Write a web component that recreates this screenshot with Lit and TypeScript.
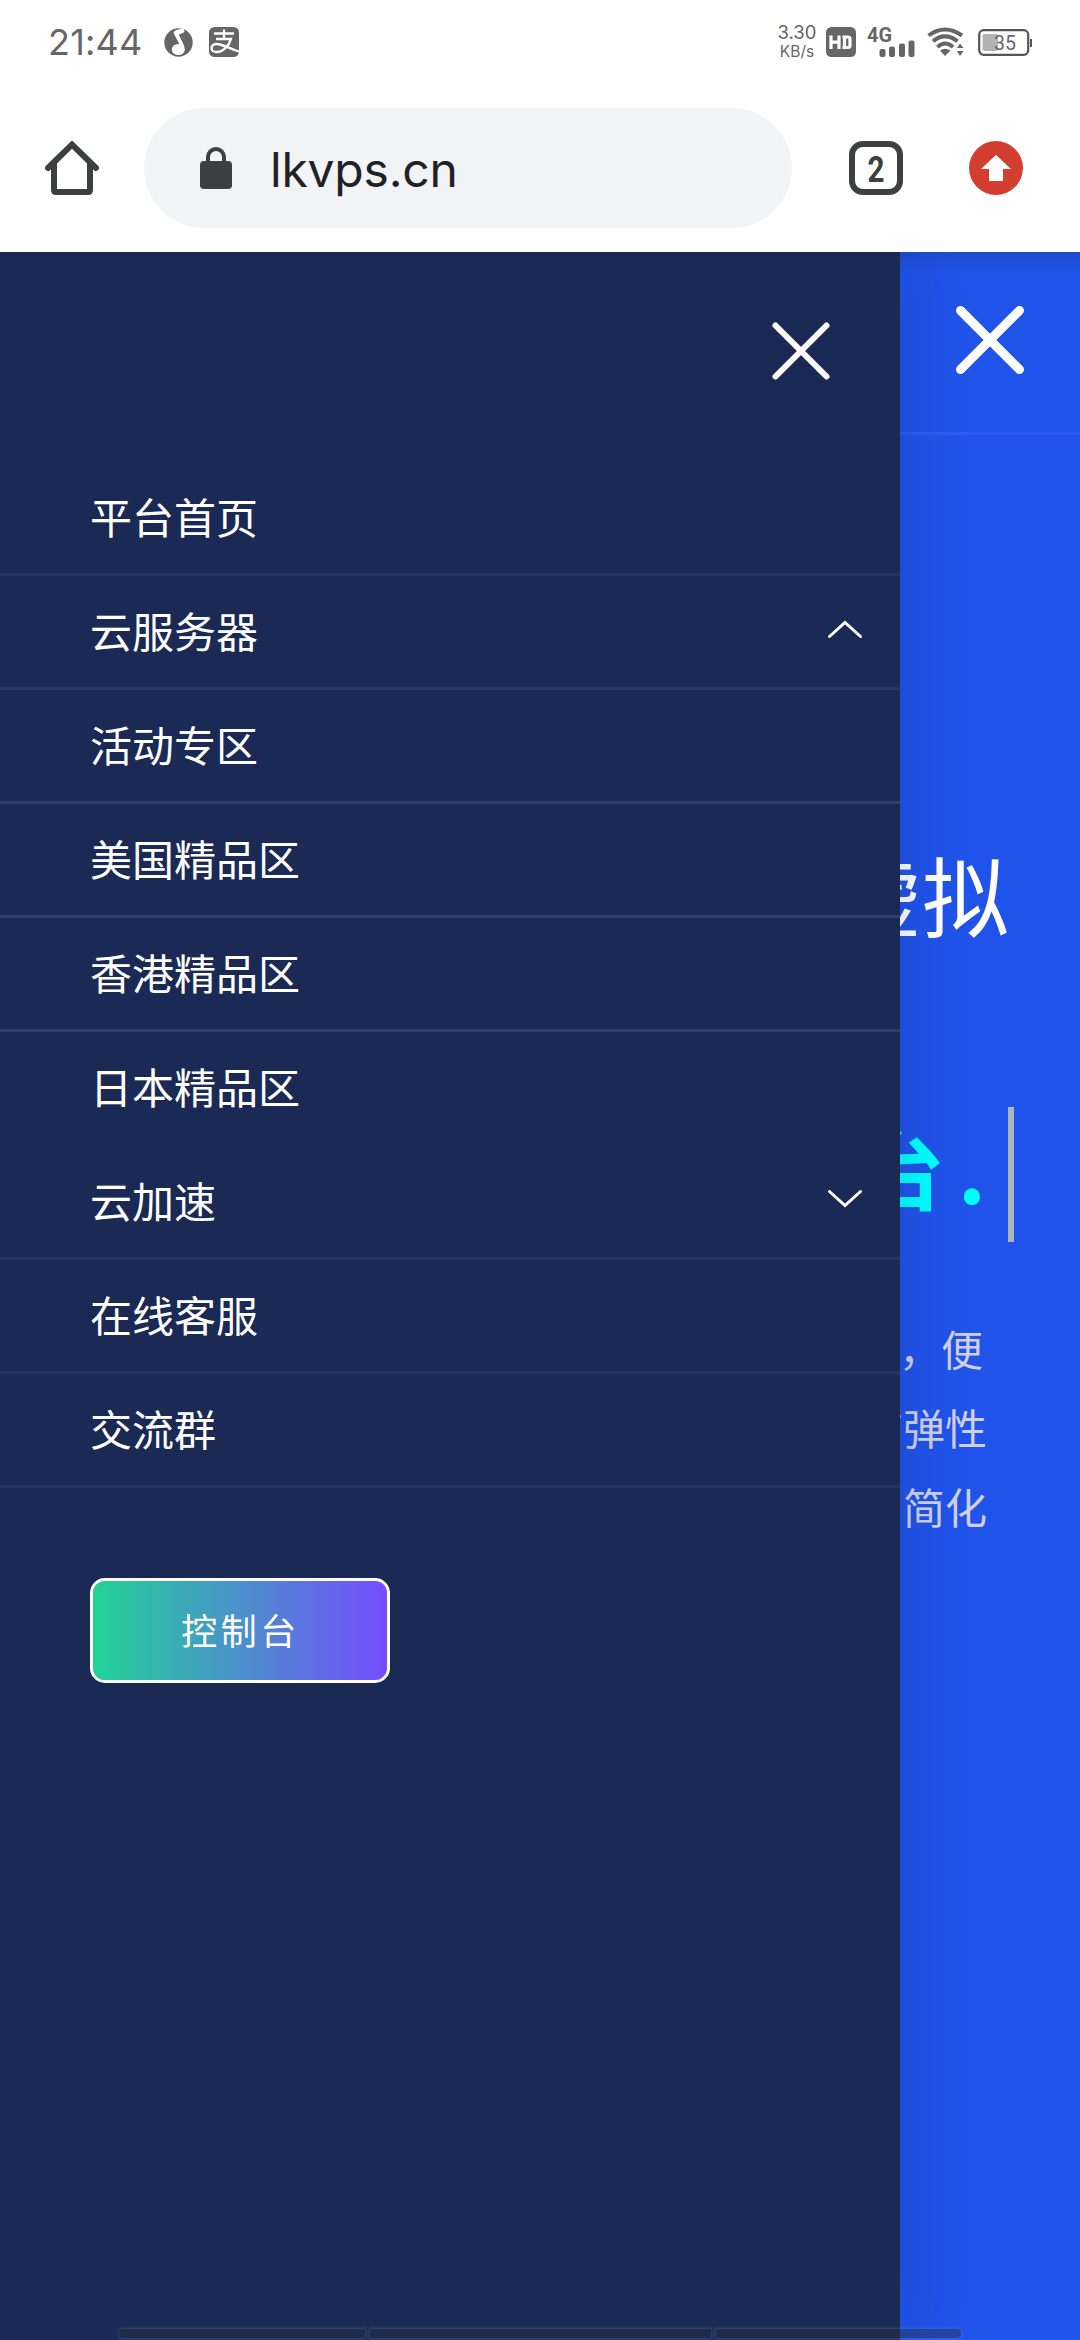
import { LitElement, html, css } from "lit";
import { customElement, property } from "lit/decorators.js";

const CJK = css`"Noto Sans CJK SC", "Noto Sans CJK JP", sans-serif`;

@customElement("status-bar")
class StatusBar extends LitElement {
  static styles = css`
    :host {
      display: flex;
      justify-content: space-between;
      height: 84px;
      padding: 0 46px 0 48px;
      font-family: Inter, Roboto, sans-serif;
      color: #666;
    }
    .group { display: flex; align-items: center; height: 84px; }
    .time { width: 116px; font-size: 36px; line-height: 84px; letter-spacing: 0.2px; }
    .music { margin-right: 16px; }
    .speed { display: flex; flex-direction: column; width: 42px; margin-right: 8px; text-align: center; }
    .rate { font-size: 18.5px; line-height: 22px; margin-top: -4px; }
    .unit { font-size: 15.5px; line-height: 15px; white-space: nowrap; margin-top: 1px; }
    svg { display: block; overflow: visible; }
    .hd { margin-right: 11px; }
    .signal { margin-right: 12px; }
    .wifi { margin-right: 13px; }
  `;
  render() {
    return html`
      <div class="group">
        <span class="time">21:44</span>
        <svg class="music" width="29" height="30" viewBox="0 0 29 30">
          <circle cx="14.5" cy="15.5" r="14.2" fill="#666" />
          <path d="M9.500 6C11 1.500 16 3.500 19.500 0.500L20.500 4.500C19 7 15 6.500 15 8L20.500 19.500 17.500 21Z" fill="#fff" />
          <ellipse cx="14.3" cy="22.5" rx="6.5" ry="5.6" fill="#fff" />
        </svg>
        <svg width="30" height="30" viewBox="0 0 30 30">
          <rect width="30" height="30" rx="5.500" fill="#666" />
          <g fill="none" stroke="#fff" stroke-width="2.300">
            <path d="M5 6.500H25M15 2.500V12M7 12H22C20 19 14 25 7.500 25 4 25 2.500 23 2.500 21 2.500 18.500 5 16.800 8 17 14 17.200 20 21.500 30 24.500" />
          </g>
        </svg>
      </div>
      <div class="group">
        <div class="speed"><span class="rate">3.30</span><span class="unit">KB/s</span></div>
        <svg class="hd" width="30" height="30" viewBox="0 0 30 30">
          <rect width="30" height="30" rx="5.500" fill="#666" />
          <path d="M5 8.500V22M13 8.500V22M5 15.200H13M18.500 10V20.500M16.500 10H22Q24 10 24 12V18.500Q24 20.500 22 20.500H16.500" fill="none" stroke="#fff" stroke-width="3.200" />
        </svg>
        <svg class="signal" width="48" height="32" viewBox="0 0 48 32">
          <text x="0" y="16" font-family="Roboto" font-weight="700" font-size="20.500" textLength="25" lengthAdjust="spacingAndGlyphs" fill="#666">4G</text>
          <g fill="#666">
            <rect x="12.500" y="23" width="6" height="8" rx="2" />
            <rect x="22" y="20.500" width="6" height="10.500" rx="2" />
            <rect x="32" y="17.500" width="6" height="13.500" rx="2" />
            <rect x="41.500" y="14.500" width="6" height="16.500" rx="2" />
          </g>
        </svg>
        <svg class="wifi" width="38" height="30" viewBox="0 0 38 30">
          <g fill="none" stroke="#666" stroke-width="4">
            <path d="M1.500 8.500Q18 -3.500 35 8.500" />
            <path d="M6 14.300Q18 4.500 30.500 14.300" />
            <path d="M10.500 20Q18 13 26 20" />
          </g>
          <path d="M13 23.500Q18 20 23.500 23.500L18 29Z" fill="#666" />
          <path d="M30 21L33 16.500L36.500 21ZM30 24L33 29L36.500 24Z" fill="#666" stroke="#fff" stroke-width="3" paint-order="stroke" />
        </svg>
        <svg width="56" height="30" viewBox="0 0 56 30">
          <rect x="1.200" y="3.200" width="49" height="24.600" rx="4.500" fill="none" stroke="#555" stroke-width="2.200" />
          <rect x="4.500" y="7" width="15.500" height="17" rx="2" fill="#b3b3b3" />
          <path d="M53 12V20" stroke="#555" stroke-width="2" />
          <text x="16" y="22.500" font-family="Roboto" font-size="19.500" textLength="22" fill="#666">35</text>
        </svg>
      </div>
    `;
  }
}

@customElement("browser-bar")
class BrowserBar extends LitElement {
  static styles = css`
    :host {
      display: flex;
      align-items: center;
      height: 168px;
      padding: 0 57px 0 45px;
      box-sizing: border-box;
    }
    svg { display: block; flex: none; }
    .home { margin-right: 45px; }
    .address {
      display: flex;
      flex: none;
      align-items: center;
      box-sizing: border-box;
      width: 648px;
      height: 120px;
      padding-left: 55px;
      margin-right: 57px;
      border-radius: 60px;
      background: #f1f3f5;
    }
    .lock { margin-right: 37px; }
    .url { font: 400 48px/60px Inter, Roboto, sans-serif; letter-spacing: -0.2px; color: #202124; padding-top: 3px; }
    .tabs { margin-right: 66px; }
  `;
  render() {
    return html`
      <svg class="home" width="54" height="54" viewBox="0 0 54 54">
        <path d="M3 27L27 3.500 51 27M9 22V49Q9 51 11 51H43Q45 51 45 49V22" fill="none" stroke="#3c4043" stroke-width="6" stroke-linecap="round" />
      </svg>
      <div class="address">
        <svg class="lock" width="34" height="44" viewBox="0 0 34 44">
          <rect x="1" y="15" width="32" height="28" rx="4" fill="#3c4043" />
          <path d="M9 17V11a8 8 0 0 1 16 0V17" fill="none" stroke="#3c4043" stroke-width="4" />
        </svg>
        <span class="url">lkvps.cn</span>
      </div>
      <svg class="tabs" width="54" height="54" viewBox="0 0 54 54">
        <rect x="3" y="3" width="48" height="48" rx="11" fill="none" stroke="#3c4043" stroke-width="6" />
        <text x="18.500" y="40.500" font-family="Roboto" font-weight="700" font-size="37" textLength="17" lengthAdjust="spacingAndGlyphs" fill="#3c4043">2</text>
      </svg>
      <svg width="54" height="54" viewBox="0 0 54 54">
        <circle cx="27" cy="27" r="27" fill="#d23f31" />
        <path d="M27 14L42 28H34V40H20V28H12Z" fill="#fff" />
      </svg>
    `;
  }
}

interface Entry {
  label: string;
  line: "" | "soft" | "strong";
  arrow?: "up" | "down";
}

const ENTRIES: Entry[] = [
  { label: "平台首页", line: "soft" },
  { label: "云服务器", line: "soft", arrow: "up" },
  { label: "活动专区", line: "strong" },
  { label: "美国精品区", line: "strong" },
  { label: "香港精品区", line: "strong" },
  { label: "日本精品区", line: "" },
  { label: "云加速", line: "soft", arrow: "down" },
  { label: "在线客服", line: "soft" },
  { label: "交流群", line: "soft" },
];

@customElement("nav-drawer")
class NavDrawer extends LitElement {
  @property({ attribute: false }) entries: Entry[] = ENTRIES;
  static styles = css`
    :host {
      display: flex;
      flex-direction: column;
      background: #1a2a55;
      color: #fff;
      font-family: ${CJK};
      box-shadow: 0 0 60px rgba(26, 42, 85, 0.2);
      z-index: 1;
    }
    .head { display: flex; justify-content: flex-end; height: 210px; padding: 69px 69px 0 0; box-sizing: border-box; }
    svg { display: block; }
    .row {
      display: flex;
      align-items: center;
      justify-content: space-between;
      box-sizing: border-box;
      height: 114px;
      padding: 0 38px 0 90px;
      border-bottom: 3px solid transparent;
      font-size: 42px;
      line-height: 60px;
    }
    .label { padding-bottom: 4px; }
    .arrow { padding-bottom: 6px; }
    .soft { border-color: #26355f; }
    .strong { border-color: #303f66; }
    .console {
      box-sizing: border-box;
      width: 300px;
      height: 105px;
      margin: 90px 0 0 90px;
      border: 3px solid #fff;
      border-radius: 15px;
      background: linear-gradient(90deg, #22d396, #744dff) padding-box;
      color: #fff;
      font: 400 36px/96px ${CJK};
      letter-spacing: 3.500px;
      text-align: center;
      padding: 0 0 4px 1px;
    }
  `;
  render() {
    return html`
      <div class="head">
        <svg width="60" height="60" viewBox="0 0 60 60">
          <path d="M4.500 4.500L55.500 55.500M55.500 4.500L4.500 55.500" stroke="#fff" stroke-width="6" stroke-linecap="round" />
        </svg>
      </div>
      ${this.entries.map(
        (e) => html`<div class="row ${e.line}">
          <span class="label">${e.label}</span>
          ${e.arrow
            ? html`<svg class="arrow" width="34" height="20" viewBox="0 0 34 20">
                <path d=${e.arrow === "up" ? "M1.500 17.500L17 3.500 32.500 17.500" : "M1.500 2.500L17 16.500 32.500 2.500"} fill="none" stroke="#fff" stroke-width="3" stroke-linecap="round" />
              </svg>`
            : ""}
        </div>`
      )}
      <button class="console">控制台</button>
    `;
  }
}

@customElement("hero-panel")
class HeroPanel extends LitElement {
  static styles = css`
    :host {
      display: flex;
      flex-direction: column;
      overflow: hidden;
      background: linear-gradient(rgba(26, 42, 85, 0.2), transparent 20px), #2053e9;
      font-family: ${CJK};
      white-space: nowrap;
    }
    svg { display: block; }
    .top { display: flex; justify-content: flex-end; height: 183px; box-sizing: border-box; padding: 54px 56px 0 0; border-bottom: 3px solid #2d5dea; }
    .title { display: flex; justify-content: flex-end; margin-top: 391px; padding-right: 71px; font-size: 87px; line-height: 135px; color: #fff; }
    .typed { display: flex; justify-content: flex-end; margin-top: 146px; padding-right: 66px; font-size: 87px; font-weight: 700; line-height: 119px; color: #0ff; }
    .typed > span { flex: none; }
    .dot { width: 63px; text-align: center; box-sizing: border-box; padding-right: 9px; }
    .caret { width: 6px; height: 135px; background: #a9b9b9; }
    .text { display: flex; flex-direction: column; align-items: flex-end; margin-top: 66px; padding-right: 93px; font-size: 42px; line-height: 79px; color: #d0cfe4; }
    .first { padding-right: 4px; }
  `;
  render() {
    return html`
      <div class="top">
        <svg width="68" height="68" viewBox="0 0 68 68">
          <path d="M4.500 4.500L63.500 63.500M63.500 4.500L4.500 63.500" stroke="#fff" stroke-width="9" stroke-linecap="round" />
        </svg>
      </div>
      <div class="title">虚拟</div>
      <div class="typed"><span>台</span><span class="dot">.</span><span class="caret"></span></div>
      <div class="text"><span class="first">，便</span><span>有弹性</span><span>简化</span></div>
    `;
  }
}

@customElement("app-root")
class AppRoot extends LitElement {
  static styles = css`
    :host { display: block; width: 1080px; height: 2340px; overflow: hidden; background: #fff; }
    .page { display: grid; grid-template-columns: 900px 180px; height: 2088px; position: relative; overflow: hidden; }
    .dock { position: absolute; left: 119px; bottom: 2px; width: 842px; display: grid; grid-template-columns: 246px 341px 1fr; gap: 5px; height: 9px; z-index: 2; }
    .seg { box-sizing: border-box; background: rgba(42, 46, 50, 0.4); box-shadow: 0 0 3px 1px rgba(120, 150, 230, 0.3); }
    .seg:first-child { border-radius: 5px 0 0 5px; }
    .seg:last-child { border-radius: 0 5px 5px 0; }
  `;
  render() {
    return html`
      <status-bar></status-bar>
      <browser-bar></browser-bar>
      <div class="page">
        <nav-drawer></nav-drawer>
        <hero-panel></hero-panel>
        <div class="dock"><div class="seg"></div><div class="seg"></div><div class="seg"></div></div>
      </div>
    `;
  }
}
